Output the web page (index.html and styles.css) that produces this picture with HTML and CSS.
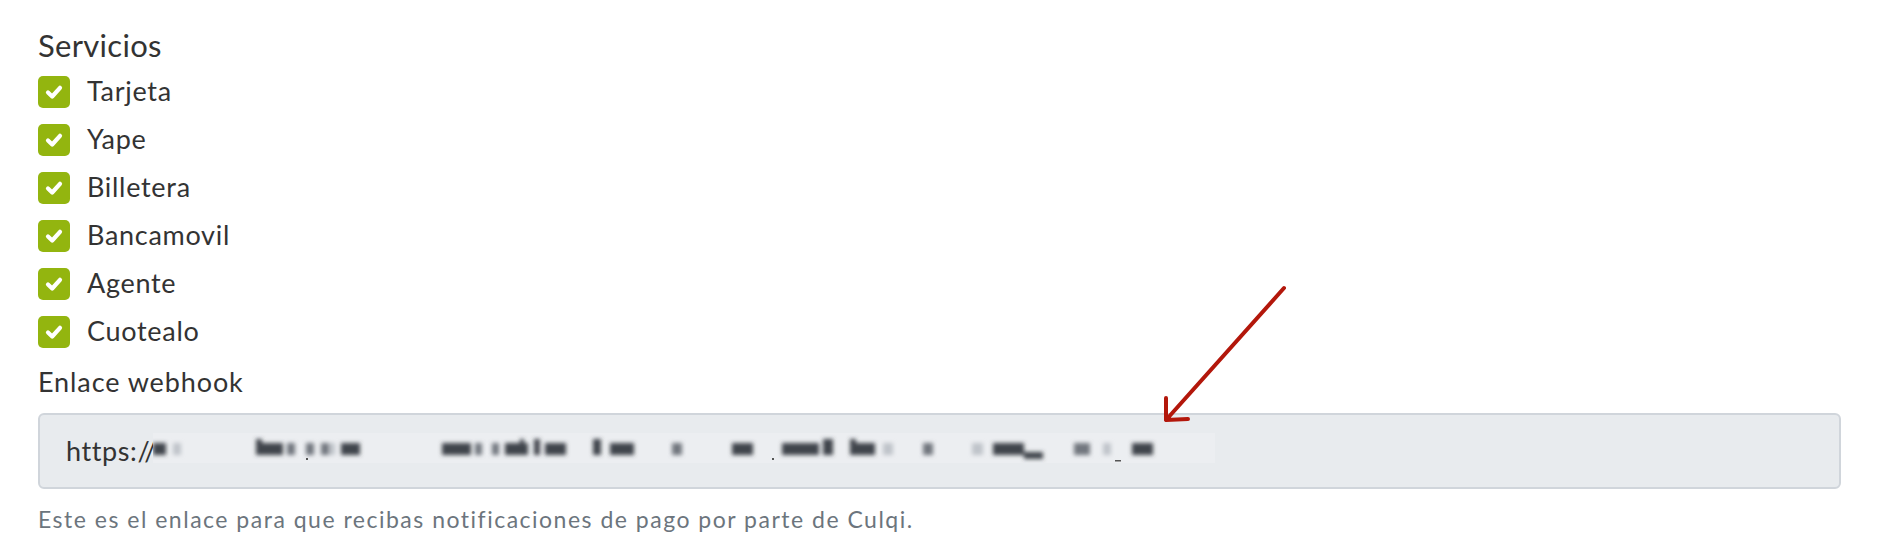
FILE: index.html
```html
<!DOCTYPE html>
<html lang="es">
<head>
<meta charset="utf-8">
<title>Servicios</title>
<link rel="stylesheet" href="styles.css">
</head>
<body>
<div class="page">
  <form class="form">
    <div class="title">Servicios</div>
    <ul class="checks">
      <li class="check-row"><span class="box"><svg viewBox="0 0 32 32"><path d="M10 16.5 L14.2 20.5 L22 11.8"/></svg></span><span class="check-label">Tarjeta</span></li>
      <li class="check-row"><span class="box"><svg viewBox="0 0 32 32"><path d="M10 16.5 L14.2 20.5 L22 11.8"/></svg></span><span class="check-label">Yape</span></li>
      <li class="check-row"><span class="box"><svg viewBox="0 0 32 32"><path d="M10 16.5 L14.2 20.5 L22 11.8"/></svg></span><span class="check-label">Billetera</span></li>
      <li class="check-row"><span class="box"><svg viewBox="0 0 32 32"><path d="M10 16.5 L14.2 20.5 L22 11.8"/></svg></span><span class="check-label">Bancamovil</span></li>
      <li class="check-row"><span class="box"><svg viewBox="0 0 32 32"><path d="M10 16.5 L14.2 20.5 L22 11.8"/></svg></span><span class="check-label">Agente</span></li>
      <li class="check-row"><span class="box"><svg viewBox="0 0 32 32"><path d="M10 16.5 L14.2 20.5 L22 11.8"/></svg></span><span class="check-label">Cuotealo</span></li>
    </ul>
    <div class="field-label">Enlace webhook</div>
    <div class="input">
      <span class="url">https://</span><svg class="redacted" width="1062" height="30" viewBox="0 0 1062 30">
        <defs><filter id="bl" x="-5%" y="-50%" width="110%" height="200%"><feGaussianBlur stdDeviation="2.1"/></filter></defs>
        <rect x="0" y="0" width="1062" height="30" fill="#eceef1"/>
        <g filter="url(#bl)">
          <g fill="#3f444c">
            <rect x="0" y="10" width="13" height="12"/>
            <rect x="103" y="10" width="27" height="12"/>
            <rect x="103" y="6" width="6" height="16"/>
            <rect x="188" y="10" width="19" height="12"/>
            <rect x="289" y="10" width="29" height="12"/>
            <rect x="352" y="10" width="23" height="12"/>
            <rect x="367" y="6" width="4" height="5"/>
            <rect x="381" y="6" width="6" height="16"/>
            <rect x="392" y="10" width="21" height="12"/>
            <rect x="440" y="6" width="8" height="16"/>
            <rect x="457" y="10" width="24" height="12"/>
            <rect x="579" y="10" width="21" height="12"/>
            <rect x="629" y="10" width="37" height="12"/>
            <rect x="670" y="6" width="10" height="16"/>
            <rect x="697" y="10" width="25" height="12"/>
            <rect x="697" y="6" width="6" height="16"/>
            <rect x="840" y="10" width="31" height="12"/>
            <rect x="871" y="19" width="19" height="7"/>
            <rect x="979" y="10" width="21" height="12"/>
          </g>
          <g fill="#72777f">
            <rect x="134" y="10" width="8" height="12"/>
            <rect x="153" y="10" width="8" height="12"/>
            <rect x="168" y="10" width="8" height="12"/>
            <rect x="322" y="10" width="7" height="12"/>
            <rect x="339" y="10" width="7" height="12"/>
            <rect x="519" y="10" width="10" height="12"/>
            <rect x="770" y="10" width="10" height="12"/>
            <rect x="921" y="10" width="16" height="12"/>
          </g>
          <g fill="#c0c4ca">
            <rect x="20" y="10" width="8" height="12"/>
            <rect x="176" y="10" width="6" height="12"/>
            <rect x="730" y="10" width="10" height="12"/>
            <rect x="819" y="10" width="11" height="12"/>
            <rect x="950" y="10" width="8" height="12"/>
          </g>
        </g>
        <rect x="619" y="25" width="2" height="2" fill="#555"/>
        <rect x="962" y="27" width="6" height="1.5" fill="#555"/>
        <rect x="153" y="25" width="2" height="2" fill="#555"/>
      </svg>
    </div>
    <p class="help">Este es el enlace para que recibas notificaciones de pago por parte de Culqi.</p>
  </form>
  <svg class="arrow" width="140" height="150" viewBox="0 0 140 150">
    <path d="M128 10 L10 142 M10 120 L10 142 L32 141"/>
  </svg>
</div>
</body>
</html>
```
FILE: styles.css
```css
html, body {
  margin: 0;
  padding: 0;
  background: #ffffff;
}

body {
  font-family: Lato, "Noto Sans", sans-serif;
  color: #333333;
}

.page {
  position: relative;
  width: 1878px;
  height: 556px;
  overflow: hidden;
}

.form {
  padding: 25px 37px 0 38px;
}

.title {
  font-size: 31px;
  line-height: 40px;
  letter-spacing: 0.3px;
}

.checks {
  list-style: none;
  margin: 3px 0 0;
  padding: 0;
}

.check-row {
  display: flex;
  align-items: center;
  height: 48px;
  gap: 17px;
}

.box {
  width: 32px;
  height: 32px;
  border-radius: 5px;
  background: #93b50f;
  display: flex;
  flex: none;
}

.box svg {
  width: 32px;
  height: 32px;
}

.box path {
  fill: none;
  stroke: #ffffff;
  stroke-width: 4.2;
  stroke-linecap: round;
  stroke-linejoin: round;
}

.check-label {
  font-size: 27px;
  line-height: 32px;
  padding-bottom: 2px;
  letter-spacing: 0.7px;
}

.field-label {
  font-size: 27px;
  line-height: 36px;
  margin-top: 8px;
  letter-spacing: 0.9px;
}

.input {
  margin-top: 13px;
  height: 72px;
  border: 2px solid #d0d5db;
  border-radius: 6px;
  background: #e8ebee;
  display: flex;
  align-items: center;
  padding-left: 26px;
}

.url {
  font-size: 27px;
  line-height: 32px;
  color: #333333;
  letter-spacing: 0.6px;
}

.redacted {
  display: block;
  flex: none;
  margin-top: -6px;
  margin-left: -4px;
}

.help {
  margin: 16px 0 0;
  font-size: 23px;
  line-height: 28px;
  letter-spacing: 1.5px;
  color: #6c757d;
}

.arrow {
  position: absolute;
  left: 1156px;
  top: 278px;
}

.arrow path {
  fill: none;
  stroke: #b3170b;
  stroke-width: 4;
  stroke-linecap: round;
  stroke-linejoin: round;
}
```
